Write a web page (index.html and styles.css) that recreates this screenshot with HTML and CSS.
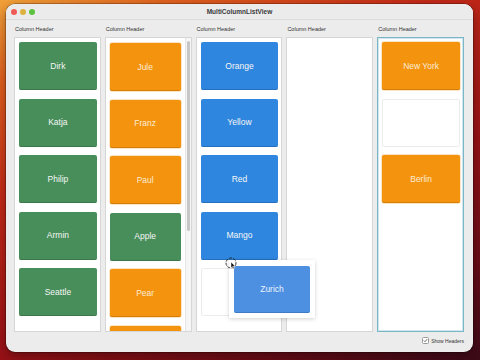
FILE: index.html
```html
<!DOCTYPE html>
<html>
<head>
<meta charset="utf-8">
<link rel="stylesheet" href="styles.css">
</head>
<body>
<div class="window">
  <div class="titlebar">
    <div class="lights"><span class="light red"></span><span class="light yellow"></span><span class="light green"></span></div>
    <div class="title">MultiColumnListView</div>
  </div>
  <div class="content">
    <div class="columns">
      <div class="col">
        <div class="hdr">Column Header</div>
        <div class="list">
          <div class="card green">Dirk</div>
          <div class="card green">Katja</div>
          <div class="card green">Philip</div>
          <div class="card green">Armin</div>
          <div class="card green">Seattle</div>
        </div>
      </div>
      <div class="col">
        <div class="hdr">Column Header</div>
        <div class="list scroll">
          <div class="items">
            <div class="card orange">Jule</div>
            <div class="card orange">Franz</div>
            <div class="card orange">Paul</div>
            <div class="card green">Apple</div>
            <div class="card orange">Pear</div>
            <div class="card orange"></div>
          </div>
          <div class="scrollbar"><div class="thumb"></div></div>
        </div>
      </div>
      <div class="col">
        <div class="hdr">Column Header</div>
        <div class="list">
          <div class="card blue">Orange</div>
          <div class="card blue">Yellow</div>
          <div class="card blue">Red</div>
          <div class="card blue">Mango</div>
          <div class="card empty"></div>
        </div>
      </div>
      <div class="col">
        <div class="hdr">Column Header</div>
        <div class="list"></div>
      </div>
      <div class="col">
        <div class="hdr">Column Header</div>
        <div class="list focused">
          <div class="card orange">New York</div>
          <div class="card empty"></div>
          <div class="card orange">Berlin</div>
        </div>
      </div>
    </div>
    <div class="footer">
      <label class="check"><span class="box"><svg width="7" height="7" viewBox="0 0 7 7"><path d="M1.3 3.6 L2.9 5.2 L5.8 1.6" fill="none" stroke="#333" stroke-width="1"/></svg></span>Show Headers</label>
    </div>
  </div>
  <div class="drag">
    <div class="card dragcard">Zurich</div>
  </div>
  <svg class="cursor" width="14" height="14" viewBox="0 0 14 14">
    <circle cx="7" cy="7" r="5" fill="none" stroke="#222" stroke-width="0.9" stroke-dasharray="3 1.2"/>
    <path d="M7 6 L7 12 L8.4 10.6 L9.6 12.8 L10.4 12.4 L9.3 10.2 L11 10.1 Z" fill="#111" stroke="#fff" stroke-width="0.5"/>
  </svg>
</div>
</body>
</html>
```

FILE: styles.css
```css
html, body {
  margin: 0;
  padding: 0;
}
body {
  width: 480px;
  height: 360px;
  overflow: hidden;
  background:
    linear-gradient(155deg, #f2a23a 0%, #e0601e 14%, #c42a18 34%, #9a1216 60%, #6a0c16 82%, #3c0a18 100%);
  font-family: "Liberation Sans", Arial, sans-serif;
}
.window {
  position: relative;
  margin: 4px 7px 0 6px;
  height: 348px;
  background: #ececec;
  border-radius: 9px;
  box-shadow: 0 0 0 0.5px rgba(0,0,0,0.45), 0 4px 12px rgba(0,0,0,0.35);
  display: flex;
  flex-direction: column;
  overflow: hidden;
}
.titlebar {
  height: 15px;
  display: flex;
  align-items: center;
  position: relative;
  background: #ebebeb;
  border-bottom: 1px solid #dcdcdc;
}
.lights {
  display: flex;
  gap: 3px;
  padding-left: 5px;
}
.light {
  width: 6px;
  height: 6px;
  border-radius: 50%;
}
.light.red { background: #ee5b56; }
.light.yellow { background: #dcb23e; }
.light.green { background: #5cc23f; }
.title {
  position: absolute;
  left: 0;
  right: 0;
  text-align: center;
  font-size: 6.5px;
  font-weight: bold;
  color: #3a3a3a;
}
.content {
  flex: 1;
  display: flex;
  flex-direction: column;
  padding: 5px 9px 0 8px;
}
.columns {
  display: grid;
  grid-template-columns: repeat(5, 1fr);
  gap: 4px;
}
.col {
  display: flex;
  flex-direction: column;
}
.hdr {
  height: 9px;
  margin-bottom: 3px;
  font-size: 5.5px;
  line-height: 9px;
  color: #333;
  padding-left: 1px;
}
.list {
  height: 295px;
  background: #fff;
  border: 1px solid #d6d6d6;
  box-sizing: border-box;
  padding: 4px 3px 0 4px;
  display: flex;
  flex-direction: column;
  gap: 8.5px;
  overflow: hidden;
}
.list.scroll {
  flex-direction: row;
  padding: 0;
  gap: 0;
}
.items {
  flex: 1;
  padding: 5px 4px 0 4px;
  display: flex;
  flex-direction: column;
  gap: 8.5px;
  overflow: hidden;
}
.scrollbar {
  width: 6px;
  background: #f6f6f6;
  border-left: 1px solid #e4e4e4;
  padding: 3px 1px;
  box-sizing: border-box;
}
.thumb {
  height: 190px;
  background: #c6c6c6;
  border-radius: 2px;
}
.list.focused {
  border: 1px solid #7ab6c6;
  box-shadow: inset 0 0 0 1px #cfe6ee;
}
.card {
  flex: none;
  height: 48px;
  border-radius: 2px;
  display: flex;
  align-items: center;
  justify-content: center;
  font-size: 8.5px;
  color: #f6f6f6;
  box-sizing: border-box;
}
.card.green {
  background: #478e5a;
  border-bottom: 1px solid #3b774b;
}
.card.orange {
  background: #f4930e;
  border-bottom: 1px solid #d57f0a;
  color: #fbecd6;
  box-shadow: 0 0 0 0.5px #f8c98a;
}
.card.blue {
  background: #2e86de;
  border-bottom: 1px solid #2470bd;
}
.card.empty {
  background: #fff;
  border: 1px solid #ececec;
}
.footer {
  flex: 1;
  display: flex;
  justify-content: flex-end;
  align-items: center;
  padding-bottom: 3px;
}
.check {
  display: flex;
  align-items: center;
  gap: 2px;
  font-size: 5px;
  color: #333;
}
.box {
  width: 7px;
  height: 7px;
  border: 0.5px solid #9a9a9a;
  border-radius: 1.5px;
  background: #fff;
  box-sizing: border-box;
  display: flex;
  align-items: center;
  justify-content: center;
}
.box svg { display: block; }
.drag {
  position: absolute;
  left: 223px;
  top: 256px;
  width: 86px;
  height: 58px;
  background: #fff;
  box-shadow: 0 1px 4px rgba(0,0,0,0.18);
  padding: 6px 5px 5px 5px;
  box-sizing: border-box;
}
.card.dragcard {
  height: 47px;
  background: #4d8fe0;
  border-bottom: 1px solid #3f7bc4;
  color: #eaf2fc;
}
.cursor {
  position: absolute;
  left: 218px;
  top: 252px;
}
```
